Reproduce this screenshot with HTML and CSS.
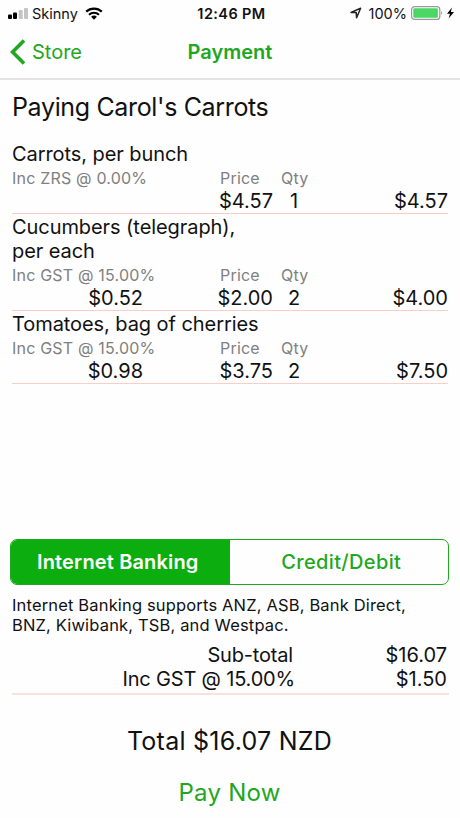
FILE: index.html
```html
<!DOCTYPE html>
<html lang="en">
<head>
    <meta charset="UTF-8">
    <meta name="viewport" content="width=device-width, initial-scale=1.0">
    <title>Payment</title>
    <link rel="stylesheet" href="styles.css">
</head>
<body>
    <div class="status-bar">
        <div class="status-left">
            <svg class="signal" width="20" height="12" viewBox="0 0 20 12">
                <rect x="0" y="6.5" width="4" height="4.5" rx="1" fill="#000"/>
                <rect x="5" y="4.5" width="4" height="6.5" rx="1" fill="#000"/>
                <rect x="10.7" y="2" width="4" height="9" rx="1" fill="#c4c4c4"/>
                <rect x="16" y="0" width="4" height="11" rx="1" fill="#c4c4c4"/>
            </svg>
            <span class="carrier">Skinny</span>
            <svg class="wifi" width="18" height="13" viewBox="0 0 18 13">
                <path d="M1.2 4.6C5.5 0.5 12.5 0.5 16.8 4.6" fill="none" stroke="#000" stroke-width="2.2"/>
                <path d="M4 7.7C6.8 5.1 11.2 5.1 14 7.7" fill="none" stroke="#000" stroke-width="2.1"/>
                <path d="M6.1 9.7C7.7 8.2 10.3 8.2 11.9 9.7L9 12.7Z" fill="#000"/>
            </svg>
        </div>
        <div class="clock">12:46 PM</div>
        <div class="status-right">
            <svg class="location" width="12" height="12" viewBox="0 0 12 12">
                <path d="M1 5.4L10.6 1.2L6.6 10.8L6.2 5.6Z" fill="none" stroke="#222" stroke-width="1.5" stroke-linejoin="round"/>
            </svg>
            <span class="percent">100%</span>
            <svg class="battery" width="44" height="14" viewBox="0 0 44 14">
                <rect x="0.6" y="0.6" width="28.2" height="12.8" rx="3" fill="#fff" stroke="#999" stroke-width="1.2"/>
                <rect x="2.3" y="2.3" width="24.6" height="9.4" rx="1.3" fill="#4bd763"/>
                <path d="M30.3 5Q32.2 7 30.3 9Z" fill="#888"/>
                <path d="M41 1.6L36 7.8H39L37.6 12.4L43 6.1H39.8Z" fill="#000"/>
            </svg>
        </div>
    </div>

    <div class="nav-bar">
        <a class="back">
            <svg width="16" height="26" viewBox="0 0 16 26">
                <path d="M14 1.6L2.6 13L14 24.4" fill="none" stroke="#1fa71f" stroke-width="3.6"/>
            </svg>
            <span>Store</span>
        </a>
        <div class="nav-title">Payment</div>
    </div>

    <div class="content">
        <h1>Paying Carol's Carrots</h1>

        <div class="items">
            <div class="item">
                <div class="item-name">Carrots, per bunch</div>
                <div class="item-row labels">
                    <span class="tax-label">Inc ZRS @ 0.00%</span>
                    <span class="price-label">Price</span>
                    <span class="qty-label">Qty</span>
                </div>
                <div class="item-row values">
                    <span class="tax"></span>
                    <span class="price">$4.57</span>
                    <span class="qty">1</span>
                    <span class="amount">$4.57</span>
                </div>
            </div>
            <div class="item">
                <div class="item-name">Cucumbers (telegraph),<br>per each</div>
                <div class="item-row labels">
                    <span class="tax-label">Inc GST @ 15.00%</span>
                    <span class="price-label">Price</span>
                    <span class="qty-label">Qty</span>
                </div>
                <div class="item-row values">
                    <span class="tax">$0.52</span>
                    <span class="price">$2.00</span>
                    <span class="qty">2</span>
                    <span class="amount">$4.00</span>
                </div>
            </div>
            <div class="item">
                <div class="item-name">Tomatoes, bag of cherries</div>
                <div class="item-row labels">
                    <span class="tax-label">Inc GST @ 15.00%</span>
                    <span class="price-label">Price</span>
                    <span class="qty-label">Qty</span>
                </div>
                <div class="item-row values">
                    <span class="tax">$0.98</span>
                    <span class="price">$3.75</span>
                    <span class="qty">2</span>
                    <span class="amount">$7.50</span>
                </div>
            </div>
        </div>
    </div>

    <div class="checkout">
        <div class="segmented">
            <button class="segment active">Internet Banking</button>
            <button class="segment credit">Credit/Debit</button>
        </div>
        <p class="note">Internet Banking supports ANZ, ASB, Bank Direct,<br>BNZ, Kiwibank, TSB, and Westpac.</p>
        <div class="summary">
            <div class="summary-row">
                <span class="summary-label subtotal">Sub-total</span>
                <span class="summary-value">$16.07</span>
            </div>
            <div class="summary-row">
                <span class="summary-label">Inc GST @ 15.00%</span>
                <span class="summary-value">$1.50</span>
            </div>
        </div>
        <div class="total">Total $16.07 NZD</div>
        <button class="pay-now">Pay Now</button>
    </div>
</body>
</html>
```
FILE: styles.css
```css
* {
    box-sizing: border-box;
}

body {
    font-family: Inter, "Liberation Sans", sans-serif;
    background-color: #fefefe;
    color: #111;
    margin: 0;
    height: 818px;
    display: flex;
    flex-direction: column;
    overflow: hidden;
    white-space: nowrap;
}

button {
    font-family: inherit;
    background: none;
    border: none;
    padding: 0;
    margin: 0;
}

.status-bar {
    display: grid;
    grid-template-columns: 1fr auto 1fr;
    align-items: center;
    height: 26px;
    padding: 0 5px 0 8px;
    font-size: 14.5px;
}

.status-left,
.status-right {
    display: flex;
    align-items: center;
}

.status-right {
    justify-content: flex-end;
}

.signal {
    margin-top: 2px;
}

.carrier {
    margin: 0 7px 0 4px;
}

.clock {
    font-size: 14.5px;
    font-weight: 600;
    letter-spacing: 0.4px;
}

.percent {
    margin: 0 4px 0 7px;
}

.nav-bar {
    display: grid;
    grid-template-columns: 1fr auto 1fr;
    align-items: center;
    height: 54px;
    padding: 0 10px;
    border-bottom: 2px solid #e4e4e4;
    color: #1fa71f;
    font-size: 20px;
}

.back {
    display: flex;
    align-items: center;
    gap: 6px;
}

.nav-title {
    font-weight: 600;
}

.content {
    flex: 1;
    padding: 12px 12px 0;
}

h1 {
    margin: 0 0 18px;
    font-size: 25px;
    font-weight: 400;
    letter-spacing: -0.35px;
    line-height: 31px;
}

.item {
    border-bottom: 1px solid #f8cfc5;
}

.item-name {
    padding-top: 1px;
    font-size: 20px;
    letter-spacing: -0.07px;
    line-height: 24.7px;
}

.item-row {
    display: grid;
    grid-template-columns: 131px 130px 36px 1fr;
}

.labels {
    grid-template-columns: 208px 61px 1fr;
    color: #808080;
    font-size: 16px;
    letter-spacing: 0.2px;
    line-height: 22px;
}

.values {
    font-size: 20px;
    line-height: 24px;
    text-align: right;
}

.qty {
    text-align: center;
    padding-left: 6px;
}

.checkout {
    height: 279px;
    padding: 0 11px 0 10px;
}

.segmented {
    display: flex;
    height: 46px;
    border: 1.5px solid #1fa71f;
    border-radius: 7px;
    overflow: hidden;
}

.segment {
    flex: 1;
    color: #1fa71f;
    font-size: 20px;
    font-weight: 500;
    letter-spacing: 0.35px;
}

.segment.active {
    padding-right: 5px;
    background-color: #0bad0f;
    color: #fff;
    font-weight: 600;
    letter-spacing: 0.15px;
}

.segment.credit {
    padding-left: 5px;
}

.note {
    margin: 10px 2px 8px;
    font-size: 16.5px;
    letter-spacing: 0.16px;
    line-height: 20px;
}

.summary {
    margin: 0 0 0 2px;
    padding: 0 2px 2px 0;
    border-bottom: 2px solid #f8e2dd;
    font-size: 20px;
    line-height: 24px;
}

.summary-row {
    display: grid;
    grid-template-columns: 283px 1fr;
    text-align: right;
}

.summary-label {
    letter-spacing: -0.18px;
}

.subtotal {
    padding-right: 2px;
}

.total {
    margin-top: 30px;
    font-size: 25px;
    letter-spacing: 0.25px;
    line-height: 32px;
    text-align: center;
}

.pay-now {
    display: block;
    margin: 20px auto 0;
    color: #1fa71f;
    font-size: 24px;
    letter-spacing: 0.25px;
    line-height: 32px;
}
```
